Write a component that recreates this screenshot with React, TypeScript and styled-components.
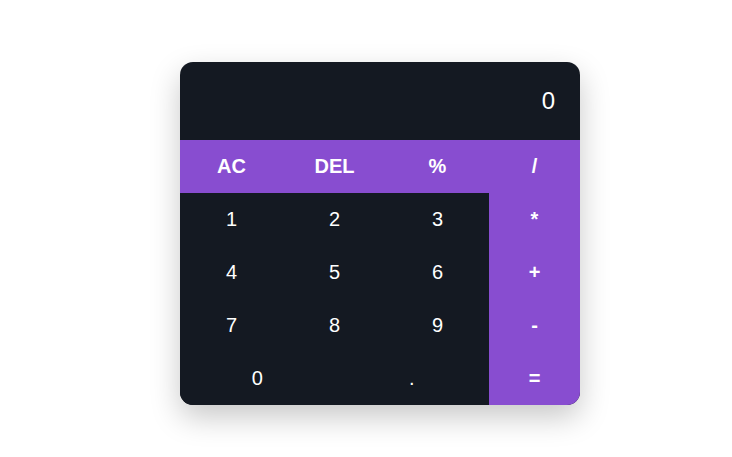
import styled, { createGlobalStyle } from "styled-components";

const GlobalStyle = createGlobalStyle`
  * { box-sizing: border-box; }
  body {
    margin: 0;
    background: #ffffff;
    font-family: "Liberation Sans", Arial, sans-serif;
  }
`;

const Page = styled.div`
  min-height: 457px;
  display: flex;
  justify-content: center;
  align-items: flex-start;
  padding: 62px 0 0 28px;
`;

const Calculator = styled.div`
  width: 400px;
  border-radius: 13px;
  overflow: hidden;
  background: #141922;
  box-shadow: 0 12px 30px rgba(0, 0, 0, 0.22);
`;

const Display = styled.div`
  height: 78px;
  display: flex;
  align-items: center;
  justify-content: flex-end;
  padding: 0 25px 0 0;
  color: #ffffff;
  font-size: 24px;
`;

const Keys = styled.div`
  display: grid;
  grid-template-columns: repeat(6, 1fr) 91px;
  grid-auto-rows: 53px;
`;

const Key = styled.button<{ $accent?: boolean; $span?: number; $bold?: boolean }>`
  grid-column: span ${(p) => p.$span ?? 2};
  border: none;
  margin: 0;
  padding: 0;
  background: ${(p) => (p.$accent ? "#884dd0" : "#141922")};
  color: #ffffff;
  font-family: "Liberation Sans", Arial, sans-serif;
  font-size: 20px;
  font-weight: ${(p) => (p.$bold ? 700 : 400)};
  cursor: pointer;
`;

const Op = styled(Key).attrs({ $accent: true, $bold: true, $span: 1 })``;

export default function App() {
  return (
    <>
      <GlobalStyle />
      <Page>
        <Calculator>
          <Display>0</Display>
          <Keys>
            <Key $accent $bold>AC</Key>
            <Key $accent $bold>DEL</Key>
            <Key $accent $bold>%</Key>
            <Op>/</Op>
            <Key>1</Key>
            <Key>2</Key>
            <Key>3</Key>
            <Op>*</Op>
            <Key>4</Key>
            <Key>5</Key>
            <Key>6</Key>
            <Op>+</Op>
            <Key>7</Key>
            <Key>8</Key>
            <Key>9</Key>
            <Op>-</Op>
            <Key $span={3}>0</Key>
            <Key $span={3}>.</Key>
            <Op>=</Op>
          </Keys>
        </Calculator>
      </Page>
    </>
  );
}
